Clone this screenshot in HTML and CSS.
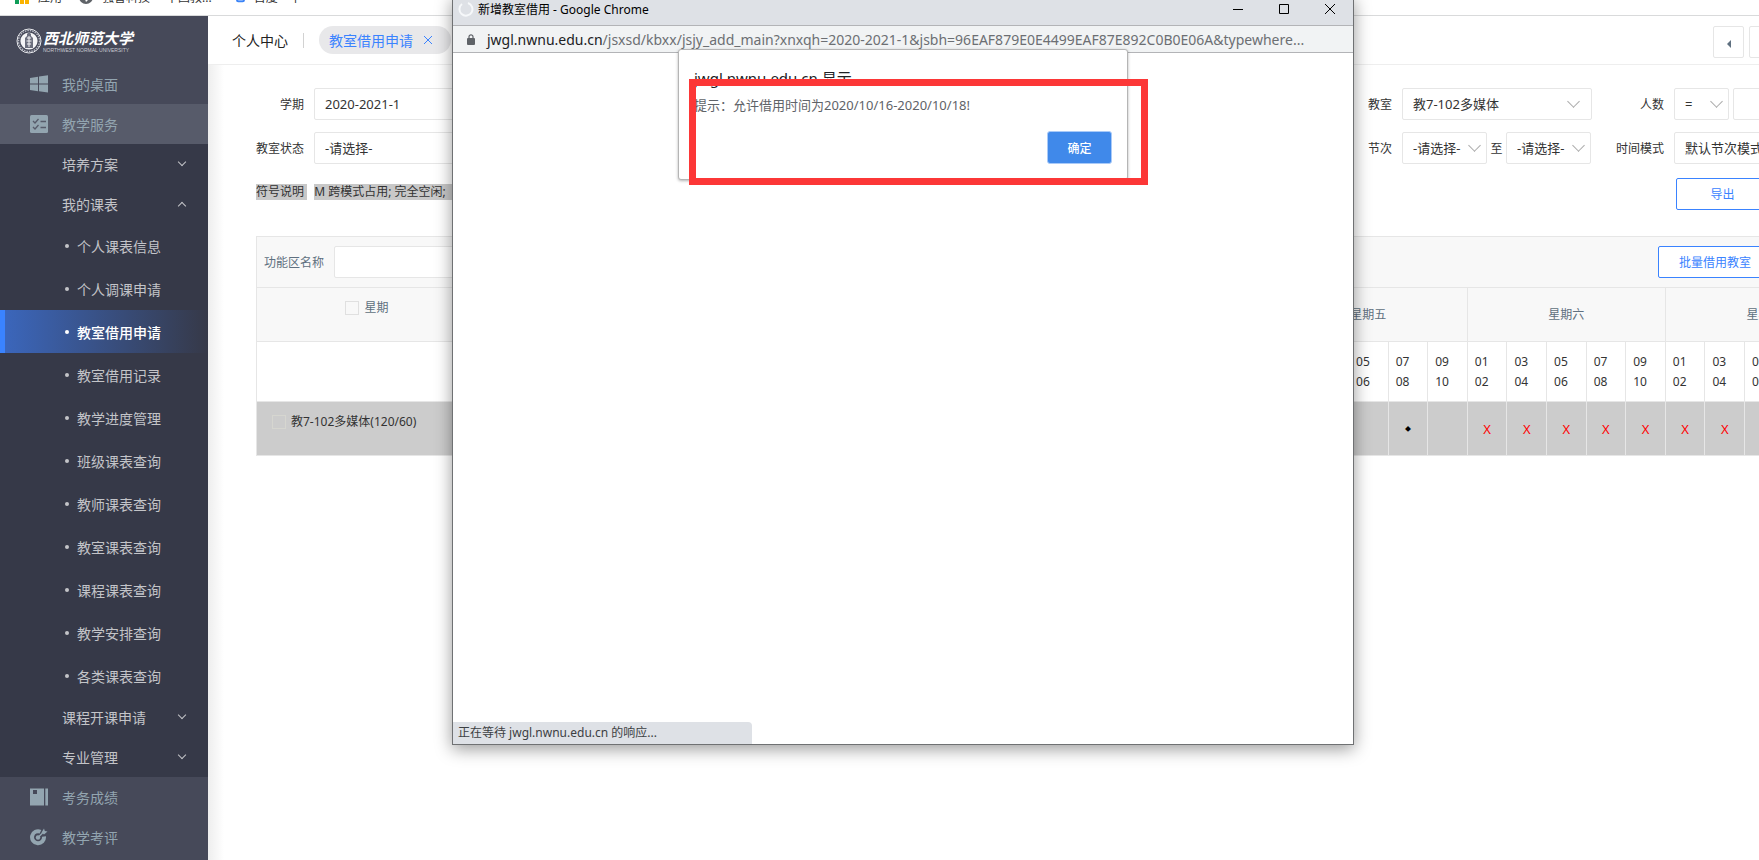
FILE: index.html
```
<!DOCTYPE html>
<html lang="zh-CN">
<head>
    <meta charset="UTF-8">
    <meta name="viewport" content="width=device-width, initial-scale=1.0">
    <title>教室借用申请</title>
    <link rel="stylesheet" href="styles.css">
</head>

<body>
    <nav class="bookmarks">
        <a href="#" class="mark mark-apps"><svg width="14" height="14" viewBox="0 0 14 14"><path fill="#0f9d58" d="M0 10h4v4H0z"/><path fill="#fbb300" d="M5 10h4v4H5zM10 10h4v4h-4z"/><path fill="#ea4335" d="M0 0h4v4H0z"/></svg>应用</a>
        <a href="#" class="mark mark-tech"><svg width="14" height="14" viewBox="0 0 14 14"><circle cx="7" cy="7" r="7" fill="#5f6368"/><path fill="#fff" d="M2 8l4 1 1 3 2-2 3-1-2-5-6 1z"/></svg>强智科技</a>
        <a href="#" class="mark mark-edu">中国教...</a>
        <a href="#" class="mark mark-baidu"><svg width="12" height="14" viewBox="0 0 12 14"><rect width="12" height="14" rx="3" fill="#3a83f7"/><path d="M3 11V8h6v3zM6 8v3" fill="none" stroke="#fff"/></svg>百度一下</a>
    </nav>

    <div class="layout">
        <aside class="sidebar">
            <a href="#" class="logo">
                <svg width="26" height="28" viewBox="0 0 26 26">
                    <circle cx="13" cy="13" r="12" fill="none" stroke="#e8e9ed" stroke-width="1"/>
                    <circle cx="13" cy="13" r="10.5" fill="none" stroke="#b9bbc5" stroke-width="1.4" stroke-dasharray="1.5 1"/>
                    <circle cx="13" cy="13" r="8.6" fill="#f4f4f6"/>
                    <path d="M9 20V10l2-2V6l2-2 2 2v2l2 2v10z" fill="#6c6f7e"/>
                    <path d="M11 10h4M10.500 13h5M11 16h4M13 8v11" stroke="#f4f4f6" fill="none"/>
                </svg>
                <span class="logo-text">
                    <span class="logo-cn">西北师范大学</span>
                    <span class="logo-en">NORTHWEST NORMAL UNIVERSITY</span>
                </span>
            </a>
            <a href="#" class="menu">
                <svg width="18" height="18" viewBox="0 0 18 18"><path fill="#93a5b0" d="M0 3l8-1.200V8.500H0zM9 1.600L18 .2v8.300H9zM0 9.500h8v6.800l-8-1.200zM9 9.500h9V17.500l-9-1.200z"/></svg>我的桌面
            </a>
            <a href="#" class="menu menu-open">
                <svg width="18" height="18" viewBox="0 0 18 18"><rect width="18" height="18" rx="1.500" fill="#93a5b0"/><path d="M3 6l2 2 3.500-4M3 12l2 2 3.500-4M10.500 6.500H16M10.500 12.500H16" fill="none" stroke="#575b6a" stroke-width="1.300"/></svg>教学服务
            </a>
            <div class="submenu">
                <a href="#" class="sub">培养方案<i class="arrow"></i></a>
                <a href="#" class="sub">我的课表<i class="arrow up"></i></a>
                <ul class="leafs">
                    <li><a href="#">个人课表信息</a></li>
                    <li><a href="#">个人调课申请</a></li>
                    <li class="active"><a href="#">教室借用申请</a></li>
                    <li><a href="#">教室借用记录</a></li>
                    <li><a href="#">教学进度管理</a></li>
                    <li><a href="#">班级课表查询</a></li>
                    <li><a href="#">教师课表查询</a></li>
                    <li><a href="#">教室课表查询</a></li>
                    <li><a href="#">课程课表查询</a></li>
                    <li><a href="#">教学安排查询</a></li>
                    <li><a href="#">各类课表查询</a></li>
                </ul>
                <a href="#" class="sub">课程开课申请<i class="arrow"></i></a>
                <a href="#" class="sub">专业管理<i class="arrow"></i></a>
            </div>
            <a href="#" class="menu">
                <svg width="18" height="18" viewBox="0 0 18 18"><path fill="#93a5b0" d="M0 .5h14v17H0zM15.300 .5H18v17h-2.700z"/><path fill="#464959" d="M3 2h4v4H3z"/></svg>考务成绩
            </a>
            <a href="#" class="menu">
                <svg width="18" height="18" viewBox="0 0 18 18"><path d="M10.500 3.700A6 6 0 1 0 14 8.500" fill="none" stroke="#93a5b0" stroke-width="4"/><circle cx="8" cy="9.500" r="2.200" fill="#93a5b0"/><path d="M8 9.500l5-5" stroke="#93a5b0" stroke-width="1.500"/><path d="M11.500 4.500L14 .5l.8 2.400 2.700.6-3.500 3z" fill="#93a5b0"/></svg>教学考评
            </a>
        </aside>

        <main class="main">
            <header class="tabs">
                <a href="#" class="home">个人中心</a>
                <span class="split"></span>
                <a href="#" class="tab">教室借用申请<svg width="10" height="10" viewBox="0 0 10 10"><path d="M1 1l8 8M9 1L1 9" stroke="#3a83ff" fill="none"/></svg></a>
                <div class="tools">
                    <button type="button" aria-label="向左"><svg width="6" height="8" viewBox="0 0 6 8"><path d="M5 0v8L1 4z" fill="#5f7080"/></svg></button>
                    <button type="button" aria-label="向右"></button>
                </div>
            </header>

            <div class="scroll">
                <div class="content">
                    <form class="filter">
                        <div class="field">
                            <label for="term">学期</label>
                            <span class="select w190"><select id="term"><option>2020-2021-1</option></select></span>
                        </div>
                        <div class="field short">
                            <label for="room">教室</label>
                            <span class="select w190"><select id="room"><option>教7-102多媒体</option></select></span>
                        </div>
                        <div class="field">
                            <label for="op">人数</label>
                            <span class="select w55"><select id="op"><option>=</option></select></span>
                            <input type="text" class="count" aria-label="人数值">
                        </div>
                        <div class="field">
                            <label for="state">教室状态</label>
                            <span class="select w190"><select id="state"><option>-请选择-</option></select></span>
                        </div>
                        <div class="field short">
                            <label for="from">节次</label>
                            <span class="select w85"><select id="from"><option>-请选择-</option></select></span>
                            <label for="to" class="to">至</label>
                            <span class="select w85"><select id="to"><option>-请选择-</option></select></span>
                        </div>
                        <div class="field">
                            <label for="mode">时间模式</label>
                            <span class="select w190"><select id="mode"><option>默认节次模式</option></select></span>
                        </div>
                        <div class="legend"><span>符号说明&nbsp;</span><span>M 跨模式占用; 完全空闲;&nbsp;&nbsp;</span></div>
                        <button type="button" class="btn export">导出</button>
                    </form>

                    <div class="toolbar">
                        <label for="area">功能区名称</label>
                        <input type="text" id="area">
                        <button type="button" class="btn batch">批量借用教室</button>
                    </div>
                    <table class="grid">
                        <colgroup><col class="first"><col span="35"></colgroup>
                        <thead>
                            <tr>
                                <th class="week"><label><input type="checkbox">星期</label></th>
                                <th colspan="5">星期一</th>
                                <th colspan="5">星期二</th>
                                <th colspan="5">星期三</th>
                                <th colspan="5">星期四</th>
                                <th colspan="5">星期五</th>
                                <th colspan="5">星期六</th>
                                <th colspan="5">星期日</th>
                            </tr>
                        </thead>
                        <tbody>
                            <tr class="periods" id="periods"><td></td></tr>
                            <tr class="room" id="roomRow"><td><label><input type="checkbox">教7-102多媒体(120/60)</label></td></tr>
                        </tbody>
                    </table>
                </div>
            </div>
        </main>
    </div>

    <section class="popup">
        <div class="titlebar">
            <svg width="16" height="16" viewBox="0 0 16 16"><path d="M10 2A6.500 6.500 0 1 1 4 3" fill="none" stroke="#f6f8fa" stroke-width="2"/></svg>
            <span>新增教室借用 - Google Chrome</span>
            <svg class="winbtns" width="102" height="10" viewBox="0 0 102 10"><path d="M0 5.500h10M46.500 .5h9v9h-9zM92 0l10 10M102 0L92 10" fill="none" stroke="#000"/></svg>
        </div>
        <div class="address">
            <svg width="8" height="11" viewBox="0 0 8 11"><path d="M2 5V2.800a2 2 0 0 1 4 0V5" fill="none" stroke="#5f6368" stroke-width="1.200"/><rect y="4" width="8" height="7" rx="1" fill="#5f6368"/></svg>
            <span class="url"><b>jwgl.nwnu.edu.cn</b>/jsxsd/kbxx/jsjy_add_main?xnxqh=2020-2021-1&amp;jsbh=96EAF879E0E4499EAF87E892C0B0E06A&amp;typewhere...</span>
        </div>
        <div class="alert" role="alertdialog">
            <h2>jwgl.nwnu.edu.cn 显示</h2>
            <p>提示：允许借用时间为2020/10/16-2020/10/18!</p>
            <button type="button">确定</button>
        </div>
        <div class="marker"></div>
        <div class="status">正在等待 jwgl.nwnu.edu.cn 的响应...</div>
    </section>

    <script>
        var names = ['01<br>02', '03<br>04', '05<br>06', '07<br>08', '09<br>10'];
        var periods = '';
        var cells = '';
        for (var i = 0; i < 35; i++) {
            periods += '<td>' + names[i % 5] + '</td>';
            if (i == 23) {
                cells += '<td class="used">◆</td>';
            } else if (i >= 25 && i < 32) {
                cells += '<td class="no">X</td>';
            } else {
                cells += '<td></td>';
            }
        }
        document.getElementById('periods').innerHTML += periods;
        document.getElementById('roomRow').innerHTML += cells;
    </script>
</body>

</html>
```

FILE: styles.css
```
*{
    margin: 0;
    padding: 0;
    box-sizing: border-box;
}
:root{
    --blue: #3a83ff;
    --line: #e6e6e6;
    --icon: #93a5b0;
}
body{
    display: flex;
    flex-direction: column;
    height: 100vh;
    overflow: hidden;
    position: relative;
    background: #fff;
    color: #333;
    font-family: "Noto Sans", "Noto Sans CJK SC", sans-serif;
    font-size: 12px;
}
a{
    color: inherit;
    text-decoration: none;
}
button, input, select{
    font: inherit;
    color: inherit;
    outline: none;
}

/* bookmarks bar */
.bookmarks{
    display: flex;
    align-items: flex-end;
    flex-shrink: 0;
    height: 16px;
    padding: 0 15px 10px;
    border-bottom: 1px solid #d9dadb;
    overflow: hidden;
}
.mark{
    display: flex;
    align-items: center;
    height: 16px;
    gap: 9px;
    white-space: nowrap;
}
.mark-tech{
    margin-left: 17px;
}
.mark-edu{
    margin-left: 16px;
}
.mark-baidu{
    margin-left: 24px;
    width: 66px;
    overflow: hidden;
}

.layout{
    display: flex;
    flex: 1;
    min-height: 0;
}

/* sidebar */
.sidebar{
    width: 208px;
    flex-shrink: 0;
    overflow: hidden;
    background: #464959;
    font-size: 14px;
}
.logo{
    display: flex;
    align-items: center;
    height: 48px;
    padding: 2px 0 0 16px;
    gap: 1px;
    color: #fff;
}
.logo-text{
    display: flex;
    flex-direction: column;
    white-space: nowrap;
}
.logo-cn{
    font-size: 15px;
    line-height: 18px;
    font-weight: bold;
    font-style: italic;
}
.logo-en{
    font-family: "Liberation Sans", sans-serif;
    font-size: 5px;
    line-height: 6px;
    color: #c9cad1;
}
.menu{
    display: flex;
    align-items: center;
    height: 40px;
    padding-left: 30px;
    gap: 14px;
    color: var(--icon);
}
.menu-open{
    background: #575b6a;
}
.submenu{
    background: #363948;
    color: #c3c4c8;
}
.sub{
    display: flex;
    align-items: center;
    justify-content: space-between;
    height: 40px;
    padding: 0 22px 0 62px;
}
.arrow{
    width: 6px;
    height: 6px;
    margin: -4px 1px 0 0;
    border: solid #c3c4c8;
    border-width: 0 1px 1px 0;
    transform: rotate(45deg);
}
.arrow.up{
    margin-top: 4px;
    transform: rotate(225deg);
}
.leafs{
    list-style: none;
}
.leafs a{
    display: flex;
    align-items: center;
    height: 43px;
    padding-left: 65px;
    gap: 8px;
}
.leafs a::before{
    content: "";
    width: 4px;
    height: 4px;
    border-radius: 50%;
    background: currentColor;
}
.leafs .active a{
    padding-left: 60px;
    border-left: 5px solid var(--blue);
    background: linear-gradient(to right, #3b66bb, #363948);
    color: #fff;
    font-weight: 500;
}

/* main */
.main{
    display: flex;
    flex-direction: column;
    flex: 1;
    min-width: 0;
}
.tabs{
    display: flex;
    align-items: center;
    flex-shrink: 0;
    height: 49px;
    padding-left: 24px;
    font-size: 14px;
    overflow: hidden;
    border-bottom: 1px solid #eee;
    white-space: nowrap;
}
.home{
    color: #222;
}
.split{
    width: 1px;
    height: 15px;
    margin: 0 15px;
    background: #d2d2d2;
}
.tab{
    display: flex;
    align-items: center;
    height: 28px;
    padding: 0 18px 0 10px;
    gap: 10px;
    border-radius: 14px;
    background: #e8e8ea;
    color: var(--blue);
}
.tools{
    display: flex;
    gap: 5px;
    margin: 4px -21px 0 auto;
}
.tools button{
    width: 31px;
    height: 32px;
    border: 1px solid var(--line);
    border-radius: 2px;
    background: #fff;
}
.scroll{
    flex: 1;
    overflow: hidden;
    padding: 23px 48px;
    background: linear-gradient(to right, #eee, #fff 16px);
}
.content{
    width: 1608px;
}
.filter{
    display: grid;
    grid-template-columns: 1fr 248px 248px;
    row-gap: 12px;
    margin-bottom: 26px;
}
.field{
    display: flex;
    align-items: center;
}
.field label{
    width: 48px;
    margin-right: 10px;
    text-align: right;
}
.field.short label{
    width: 24px;
}
.field.short .to{
    width: 19px;
    margin: 0;
    text-align: center;
}
.select{
    position: relative;
    display: block;
    height: 32px;
}
.select::after{
    content: "";
    position: absolute;
    right: 14px;
    top: 9px;
    width: 8px;
    height: 8px;
    border: solid #aaa;
    border-width: 0 1px 1px 0;
    transform: rotate(45deg);
    pointer-events: none;
}
.select select, .count, .toolbar input{
    width: 100%;
    height: 32px;
    padding: 0 10px;
    border: 1px solid var(--line);
    border-radius: 2px;
    background: #fff;
    font-size: 13px;
    appearance: none;
}
.w190{
    width: 190px;
}
.w85{
    width: 85px;
}
.w55{
    width: 55px;
}
.w85::after, .w55::after{
    right: 8px;
}
.count{
    width: 131px;
    margin-left: 4px;
}
.legend{
    grid-column: 1 / 3;
    display: flex;
    align-items: flex-start;
    gap: 7px;
    padding-top: 8px;
    line-height: 16px;
}
.legend span{
    background: #c8c8c8;
}
.btn{
    height: 32px;
    border: 1px solid var(--blue);
    border-radius: 2px;
    background: #fff;
    color: var(--blue);
    font-size: 12px;
}
.export{
    width: 93px;
    margin: 2px 0 0 60px;
}
.toolbar{
    display: flex;
    align-items: center;
    height: 51px;
    padding: 0 91px 0 7px;
    border: 1px solid var(--line);
    border-bottom: 0;
    background: #f8f8f8;
    color: #5f7080;
}
.toolbar input{
    width: 190px;
    margin-left: 10px;
}
.batch{
    margin-left: auto;
    padding: 0 20px;
}

/* timetable */
.grid{
    width: 100%;
    table-layout: fixed;
    border-collapse: collapse;
    line-height: 20px;
}
.first{
    width: 221px;
}
.grid th, .grid td{
    border: 1px solid var(--line);
    padding: 0;
}
.grid th{
    height: 54px;
    background: #f8f8f8;
    color: #5f7080;
    font-weight: normal;
}
.grid .week{
    vertical-align: top;
    padding-top: 10px;
}
.grid label{
    display: inline-flex;
    align-items: center;
    gap: 5px;
}
.grid input{
    width: 14px;
    height: 14px;
    border: 1px solid #e0e0e0;
    appearance: none;
}
.grid .periods td{
    height: 60px;
    padding-left: 7px;
}
.room td{
    height: 54px;
    background: #ccc;
    text-align: center;
}
.grid .room td:first-child{
    padding: 10px 0 0 15px;
    text-align: left;
    vertical-align: top;
}
.room input{
    border-color: #d6d6d0;
}
.room .no{
    color: #f00;
    font-size: 13px;
}
.room .used{
    color: #000;
    font-size: 6px;
}

/* popup window */
.popup{
    position: absolute;
    top: -4px;
    left: 452px;
    width: 902px;
    height: 749px;
    border: 1px solid #6f7173;
    background: #fff;
    box-shadow: 0 4px 16px rgba(0, 0, 0, 0.4);
}
.titlebar{
    display: flex;
    align-items: center;
    height: 29px;
    padding: 0 18px 4px 5px;
    gap: 4px;
    border-bottom: 1px solid #b3b4b7;
    background: #dee1e6;
    color: #000;
}
.winbtns{
    margin-left: auto;
}
.address{
    display: flex;
    align-items: center;
    height: 27px;
    padding-left: 14px;
    gap: 12px;
    border-bottom: 1px solid #b3b4b7;
    background: #f1f3f4;
    color: #6c6f73;
    font-size: 14px;
    white-space: nowrap;
}
.url b{
    color: #202124;
    font-weight: normal;
}
.alert{
    position: absolute;
    top: 52px;
    left: 225px;
    width: 450px;
    height: 131px;
    padding: 17px 15px;
    border: 1px solid #b5b5b5;
    border-radius: 3px;
    background: #fff;
    box-shadow: 0 1px 3px rgba(0, 0, 0, 0.3);
}
.alert h2{
    font-size: 15px;
    line-height: 22px;
    font-weight: normal;
    color: #202124;
}
.alert p{
    margin: 6px 0 16px;
    font-size: 13px;
    line-height: 20px;
    color: #5f6368;
}
.alert button{
    display: block;
    width: 65px;
    height: 33px;
    margin-left: auto;
    border: 1px solid #a9caf8;
    border-radius: 3px;
    background: #4089ea;
    color: #fff;
    font-weight: 500;
}
/* red frame round the message */
.marker{
    position: absolute;
    top: 82px;
    left: 236px;
    width: 459px;
    height: 106px;
    border: 7px solid #fc3737;
}
.status{
    position: absolute;
    bottom: 0;
    left: 0;
    width: 299px;
    height: 22px;
    padding-left: 5px;
    border-radius: 0 4px 0 0;
    background: #dee1e6;
    color: #3c4043;
    line-height: 22px;
}
```
